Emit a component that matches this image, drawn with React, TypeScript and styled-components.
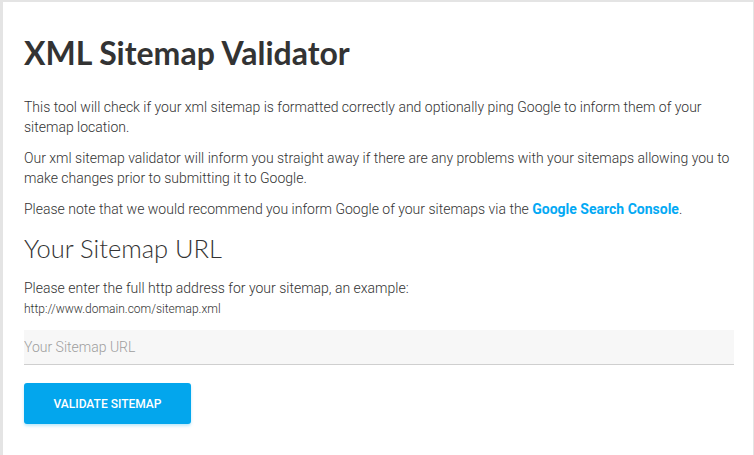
import React from 'react';
import styled, { createGlobalStyle } from 'styled-components';

const GlobalStyle = createGlobalStyle`
  html, body {
    margin: 0;
    padding: 0;
    background: #e4e4e4;
  }
  body {
    font-family: Roboto, "Liberation Sans", sans-serif;
  }
`;

const Page = styled.div`
  padding: 2px 1px 0 3px;
  min-height: 455px;
  box-sizing: border-box;
`;

const Card = styled.main`
  background: #fff;
  min-height: 453px;
  box-sizing: border-box;
  padding: 31px 19px 30px 21px;
`;

const Title = styled.h1`
  font-family: Lato, "Open Sans", sans-serif;
  font-weight: 700;
  font-size: 32px;
  line-height: 40px;
  color: #333;
  margin: 0 0 24px;
`;

const Text = styled.p`
  font-size: 14px;
  font-weight: 300;
  line-height: 20px;
  color: #333;
  margin: 0 0 11px;
`;

const Link = styled.a`
  color: #03a9f4;
  font-weight: 700;
  text-decoration: none;
`;

const Subtitle = styled.h2`
  font-family: Lato, "Open Sans", sans-serif;
  font-weight: 300;
  font-size: 25.5px;
  line-height: 32px;
  color: #333;
  margin: 13px 0 14px;
`;

const Hint = styled.p`
  font-size: 14px;
  font-weight: 300;
  line-height: 20px;
  color: #333;
  margin: 0;
`;

const Example = styled.div`
  font-size: 12px;
  font-weight: 300;
  line-height: 20px;
  color: #333;
  margin: 1px 0 11px;
`;

const UrlInput = styled.input`
  display: block;
  width: 100%;
  box-sizing: border-box;
  height: 35px;
  border: none;
  border-bottom: 1px solid #cfcfcf;
  background: #f7f7f7;
  padding: 0;
  font-family: Roboto, "Liberation Sans", sans-serif;
  font-size: 14px;
  font-weight: 300;
  color: #333;
  outline: none;

  &::placeholder {
    color: #9e9e9e;
  }
`;

const Button = styled.button`
  margin-top: 18px;
  width: 167px;
  height: 41px;
  background: #03a6ed;
  color: #fff;
  border: none;
  border-radius: 3px;
  box-shadow: 0 2px 3px rgba(3, 166, 237, 0.25);
  font-family: Roboto, "Liberation Sans", sans-serif;
  font-size: 12px;
  font-weight: 500;
  text-transform: uppercase;
  cursor: pointer;
`;

const App: React.FC = () => {
  return (
    <>
      <GlobalStyle />
      <Page>
        <Card>
          <Title>XML Sitemap Validator</Title>
          <Text>
            This tool will check if your xml sitemap is formatted correctly and optionally ping Google to inform them of your
            sitemap location.
          </Text>
          <Text>
            Our xml sitemap validator will inform you straight away if there are any problems with your sitemaps allowing you to
            make changes prior to submitting it to Google.
          </Text>
          <Text>
            Please note that we would recommend you inform Google of your sitemaps via the{' '}
            <Link href="#">Google Search Console</Link>.
          </Text>
          <Subtitle>Your Sitemap URL</Subtitle>
          <Hint>Please enter the full http address for your sitemap, an example:</Hint>
          <Example>http://www.domain.com/sitemap.xml</Example>
          <UrlInput type="text" placeholder="Your Sitemap URL" />
          <Button>Validate Sitemap</Button>
        </Card>
      </Page>
    </>
  );
};

export default App;
